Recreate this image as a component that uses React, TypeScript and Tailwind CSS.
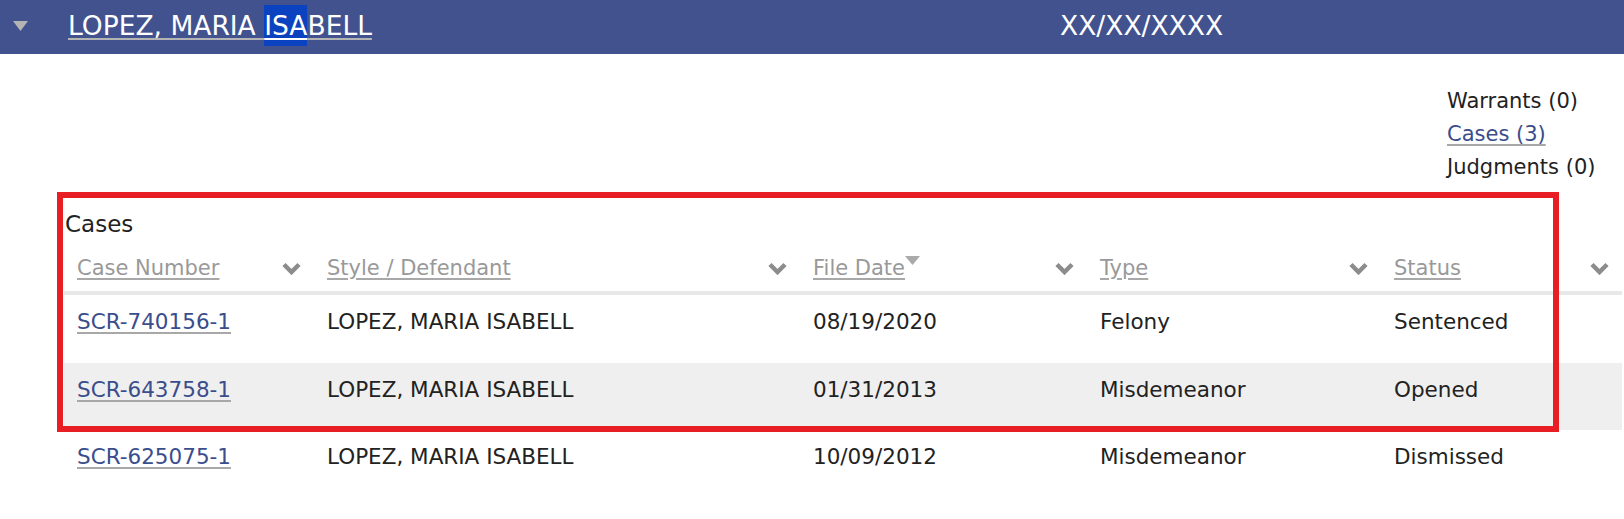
import React from "react";

const cols = "grid grid-cols-[250px_486px_287px_294px_1fr]";

const cases = [
  { number: "SCR-740156-1", style: "LOPEZ, MARIA ISABELL", filed: "08/19/2020", type: "Felony", status: "Sentenced" },
  { number: "SCR-643758-1", style: "LOPEZ, MARIA ISABELL", filed: "01/31/2013", type: "Misdemeanor", status: "Opened" },
  { number: "SCR-625075-1", style: "LOPEZ, MARIA ISABELL", filed: "10/09/2012", type: "Misdemeanor", status: "Dismissed" },
];

function Chevron() {
  return (
    <svg width="19" height="13" viewBox="0 0 19 13" className="shrink-0">
      <polyline points="2,2.5 9.5,10 17,2.5" fill="none" stroke="#8c8c8c" strokeWidth="4.5" />
    </svg>
  );
}

function HeaderCell({ label, sorted }: { label: string; sorted?: boolean }) {
  return (
    <div className="flex items-center justify-between px-[13px]">
      <span className="flex items-start">
        <a className="text-[#999] underline decoration-[#a8a8a8] decoration-2 underline-offset-[3px] cursor-pointer">
          {label}
        </a>
        {sorted && (
          <svg width="15" height="9" viewBox="0 0 15 9" className="mt-[3px]">
            <polygon points="0,0 15,0 7.5,9" fill="#aaa" />
          </svg>
        )}
      </span>
      <Chevron />
    </div>
  );
}

export default function App() {
  return (
    <div className="w-[1624px] h-[519px] bg-white relative overflow-hidden font-['DejaVu_Sans',sans-serif]">
      <div className="h-[54px] bg-[#41528f] flex items-center text-white text-[26.5px] leading-[34px] pb-[2px]">
        <div className="w-[68px] pl-[13px]">
          <svg width="15" height="10" viewBox="0 0 15 10">
            <polygon points="0,0 15,0 7.5,10" fill="#b4b4b4" />
          </svg>
        </div>
        <div className="w-[992px]">
          <a className="cursor-pointer">
            <span className="underline decoration-[#b4b4b4] decoration-2 underline-offset-[3px]">LOPEZ, MARIA </span>
            <mark className="bg-[#0b42c0] text-white py-[5px] underline decoration-white decoration-2 underline-offset-[3px]">ISA</mark>
            <span className="underline decoration-[#b4b4b4] decoration-2 underline-offset-[3px]">BELL</span>
          </a>
        </div>
        <div>XX/XX/XXXX</div>
      </div>

      <div className="mt-[31px] ml-auto w-[177px] text-[21px] leading-[33px] text-[#222]">
        <div>Warrants (0)</div>
        <div>
          <a className="text-[#3a4d8c] underline decoration-[#a8a8a8] decoration-2 underline-offset-[3px] cursor-pointer">
            Cases (3)
          </a>
        </div>
        <div>Judgments (0)</div>
      </div>

      <section className="ml-[64px] mr-[2px]">
        <h2 className="mt-[25px] ml-[1px] text-[23px] leading-[30px] text-[#222]">Cases</h2>
        <div className={`${cols} mt-[14px] pb-[8px] border-b-4 border-[#e8e8e8] text-[21px] leading-[30px]`}>
          <HeaderCell label="Case Number" />
          <HeaderCell label="Style / Defendant" />
          <HeaderCell label="File Date" sorted />
          <HeaderCell label="Type" />
          <HeaderCell label="Status" />
        </div>
        {cases.map((c, i) => (
          <div
            key={c.number}
            className={`${cols} ${i === 0 ? "h-[68px]" : "h-[67px]"} ${i === 1 ? "bg-[#efefef]" : ""} pt-[14px] text-[21.5px] leading-[25px] text-[#222]`}
          >
            <div className="px-[13px]">
              <a className="text-[#3a4d8c] underline decoration-[#a8a8a8] decoration-2 underline-offset-[3px] cursor-pointer">
                {c.number}
              </a>
            </div>
            <div className="px-[13px]">{c.style}</div>
            <div className="px-[13px]">{c.filed}</div>
            <div className="px-[13px]">{c.type}</div>
            <div className="px-[13px]">{c.status}</div>
          </div>
        ))}
      </section>

      <div className="absolute left-[57px] top-[192px] w-[1502px] h-[240px] border-[6px] border-[#e81e25] pointer-events-none" />
    </div>
  );
}
